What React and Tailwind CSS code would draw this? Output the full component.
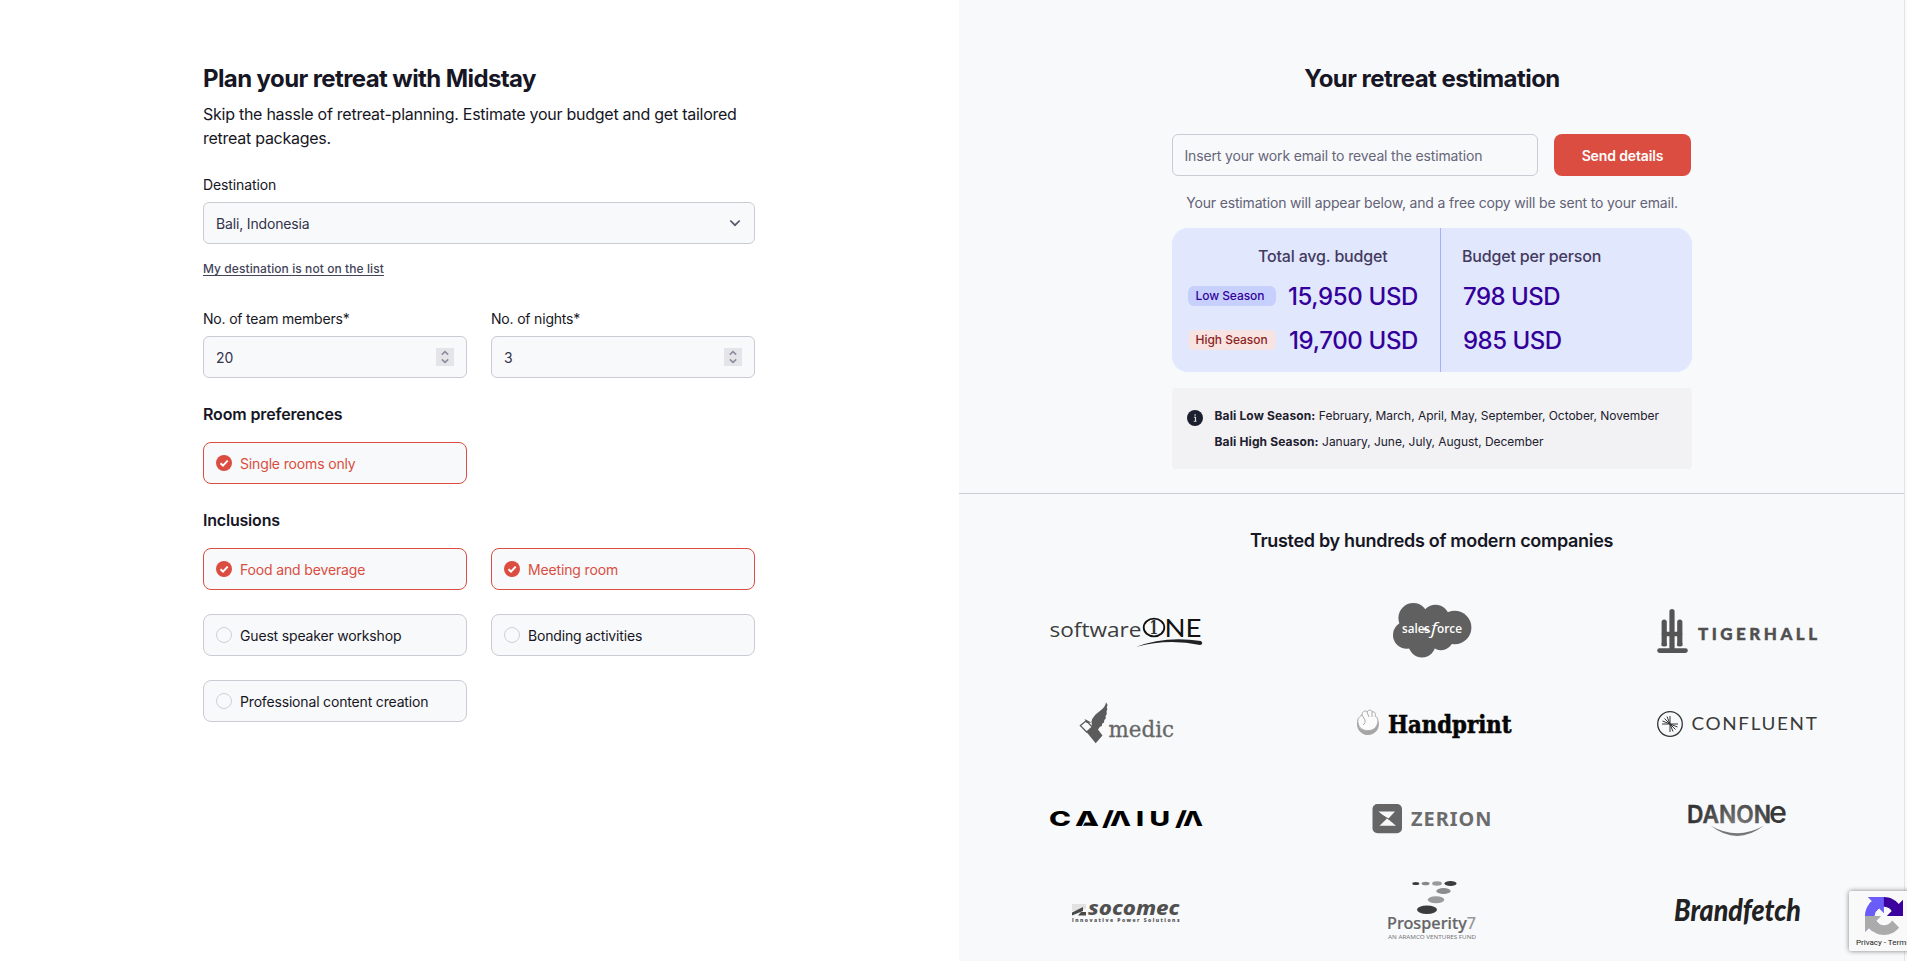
import React from "react";

const field = "h-[42px] rounded-[6px] border border-[#cbcbd3] bg-[#f8f9fb] px-3 flex items-center text-[14px] tracking-[-0.16px]";

function CheckDot() {
  return (
    <svg className="size-4 shrink-0" viewBox="0 0 16 16">
      <circle cx="8" cy="8" r="8" fill="#da4d40" />
      <path d="M4.5 8.3 7 10.6 11.7 5.6" fill="none" stroke="#fff" strokeWidth="2" />
    </svg>
  );
}

function Option({ label, checked }) {
  return (
    <div className={checked
      ? "flex h-[42px] items-center rounded-[8px] border border-[#da4d40] bg-[#f8f9fb] px-3 text-[14px] tracking-[-0.15px] text-[#da4d40]"
      : "flex h-[42px] items-center rounded-[8px] border border-[#cbcbd3] bg-[#f8f9fb] px-3 text-[14px] tracking-[-0.17px] text-[#161624]"}>
      {checked ? <CheckDot /> : <span className="size-4 shrink-0 rounded-full border border-[#d0d0d8]" />}
      <span className="ml-2">{label}</span>
    </div>
  );
}

function NumberField({ label, value }) {
  return (
    <div>
      <div className="h-5 text-[14px] leading-5 tracking-[-0.19px]">{label}</div>
      <div className={field + " mt-[7px] justify-between text-[#33334a]"}>
        <span>{value}</span>
        <span className="mb-px flex h-[18px] w-[18px] items-center justify-center bg-[#e5e4e8]">
          <svg width="10" height="14" viewBox="0 0 10 14" fill="none" stroke="#8d8b9d" strokeWidth="1.5">
            <path d="M1.8 4.6 5 1.6 8.2 4.6M1.8 9.4 5 12.4 8.2 9.4" />
          </svg>
        </span>
      </div>
    </div>
  );
}

function Logo({ x, y, w = 164, children }) {
  return (
    <div className="flex items-center justify-center">
      <svg className="overflow-visible" width={w} height="70" viewBox={`${x} ${y} ${w} 70`}>{children}</svg>
    </div>
  );
}

function Word({ x, y, w, size, font, weight, fill, children, ...rest }) {
  return (
    <text x={x} y={y} textLength={w} lengthAdjust="spacingAndGlyphs" fontSize={size} fontFamily={font} fontWeight={weight} fill={fill} {...rest}>
      {children}
    </text>
  );
}

const rays = [
  [0, -8], [-3, -7.5], [-5.5, -5.5], [-7.5, -3], [-8, 0],
  [0, 8], [3, 7.5], [5.5, 5.5], [7.5, 3], [8, 0],
];

function Logos() {
  return (
    <div className="ml-[14px] mt-7 grid grid-cols-[306px_305px_306px] auto-rows-[94px]">
      <Logo x={1044} y={595}>
        <Word x={1049.5} y={636.5} w={92} size={20.5} font="'Open Sans', sans-serif" weight="400" fill="#3c3c3c">software</Word>
        <ellipse cx="1154" cy="627.5" rx="10.3" ry="8.8" fill="none" stroke="#111" strokeWidth="1.8" />
        <Word x={1149.5} y={634} w={8.5} size={18} font="'DejaVu Serif', serif" weight="700" fill="#333">1</Word>
        <Word x={1164.5} y={636.5} w={37} size={25} font="Lato, sans-serif" weight="400" fill="#111">NE</Word>
        <path d="M1136 647Q1165 635.5 1201 641Q1204 644 1200 645Q1168 638 1136 647Z" fill="#222" />
      </Logo>
      <Logo x={1349} y={595} w={165}>
        <g fill="#606060">
          <circle cx="1413.3" cy="618" r="14.9" />
          <circle cx="1435.5" cy="618.5" r="13.8" />
          <circle cx="1454.7" cy="627.5" r="16.7" />
          <circle cx="1406.8" cy="635" r="13.8" />
          <circle cx="1422" cy="643.8" r="13.6" />
          <circle cx="1441" cy="637.8" r="12.4" />
        </g>
        <Word x={1402} y={633} w={28} size={13} font="'Open Sans', sans-serif" weight="600" fill="#fff">sales</Word>
        <Word x={1431} y={633.5} w={6} size={15.5} font="'Open Sans', sans-serif" weight="500" fill="#fff" fontStyle="italic">f</Word>
        <Word x={1437} y={633} w={25} size={13} font="'Open Sans', sans-serif" weight="600" fill="#fff">orce</Word>
      </Logo>
      <Logo x={1655} y={595}>
        <g stroke="#555" strokeLinecap="round">
          <path d="M1659.5 650.6H1685.5" strokeWidth="4.6" />
          <path d="M1672 611.6V650M1664.2 622V644M1679.8 622V644" strokeWidth="5.2" />
          <path d="M1664 634H1680" strokeWidth="4.6" />
        </g>
        <path d="M1661.6 643H1666.8V646H1661.6ZM1677.2 643H1682.4V646H1677.2Z" fill="#555" />
        <text x="1698" y="640" textLength="119" fontSize="17" fontFamily="Lato, sans-serif" fontWeight="900" fill="#505050" stroke="#505050" strokeWidth="0.4">TIGERHALL</text>
      </Logo>

      <Logo x={1044} y={689}>
        <path d="M1106 702.3L1107.6 705L1106.8 707L1107.3 709.5L1106.5 711.5L1106.8 714L1105.6 716L1105.8 718.5L1104.3 720L1104 722.5L1102.3 723.5L1101.8 726L1100 726.8L1098 729.5L1102.5 735.5L1095.7 743.3L1086.5 732L1092 726.5L1091.5 721.5Q1092 718.5 1094 716.5C1098 711 1105 709.5 1106 702.3Z" fill="#5b5b5b" />
        <path d="M1086.3 720.8L1080.4 725.6L1086.7 732L1092.3 727Z" fill="#f8f9fb" stroke="#5b5b5b" strokeWidth="1.3" />
        <path d="M1084.5 719L1091.5 722.5L1086.5 723Z" fill="#5b5b5b" />
        <Word x={1108.5} y={737.3} w={65.5} size={21.5} font="'DejaVu Serif', serif" weight="400" fill="#666" stroke="#666" strokeWidth="0.3">medic</Word>
      </Logo>
      <Logo x={1349} y={689} w={165}>
        <path d="M1357 723A11 11 0 1 0 1378.5 721Q1372 732 1364 730Q1357 729 1358 719Z" fill="#a5a5a5" />
        <path d="M1359 726C1356 719 1359 717 1362 715C1362 711 1366 710 1367 712C1369 709 1372 710 1372 712C1375 711 1376 714 1375 716C1379 717 1379 725 1374 729C1369 732 1362 731 1359 726Z" fill="#fbfbfb" stroke="#aaa" strokeWidth="1" />
        <path d="M1362 715L1365 720Q1366 723 1363 725M1367 712L1369 717M1372 712L1372 717" fill="none" stroke="#aaa" strokeWidth="1" />
        <Word x={1388} y={732.5} w={123.5} size={23.5} font="'DejaVu Serif', serif" weight="700" fill="#060606" stroke="#060606" strokeWidth="0.6">Handprint</Word>
      </Logo>
      <Logo x={1655} y={689}>
        <circle cx="1670" cy="724" r="12.3" fill="none" stroke="#333" strokeWidth="1.3" />
        <g stroke="#333" strokeWidth="1">
          {rays.map(([a, b]) => <path key={`${a},${b}`} d={`M1670 724L${1670 + a} ${724 + b}`} />)}
        </g>
        <Word x={1691.5} y={730} w={127} size={17.3} font="Lato, sans-serif" weight="400" fill="#3a3a3a" letterSpacing="1.5">CONFLUENT</Word>
      </Logo>

      <Logo x={1044} y={783}>
        <g aria-label="CAMIUM">
          <Word x={1049} y={825.7} w={22} size={20.5} font="Inter, sans-serif" weight="800" fill="#000">C</Word>
          <Word x={1075} y={825.7} w={24} size={20.5} font="Inter, sans-serif" weight="800" fill="#000">Λ</Word>
          <Word x={1102} y={825.7} w={12} size={20.5} font="Inter, sans-serif" weight="800" fill="#000">/</Word>
          <Word x={1110} y={825.7} w={21} size={20.5} font="Inter, sans-serif" weight="800" fill="#000">Λ</Word>
          <Word x={1136} y={825.7} w={8} size={20.5} font="Inter, sans-serif" weight="800" fill="#000">I</Word>
          <Word x={1149.5} y={825.7} w={20.5} size={20.5} font="Inter, sans-serif" weight="800" fill="#000">U</Word>
          <Word x={1175} y={825.7} w={12} size={20.5} font="Inter, sans-serif" weight="800" fill="#000">/</Word>
          <Word x={1183} y={825.7} w={20} size={20.5} font="Inter, sans-serif" weight="800" fill="#000">Λ</Word>
        </g>
        <path d="M1085 822.5H1094V825.7H1083Z" />
      </Logo>
      <Logo x={1349} y={783} w={165}>
        <rect x="1372.5" y="804" width="29.5" height="29.2" rx="5" fill="#666" />
        <path d="M1378.5 811.5H1395L1388 819ZM1378.5 811.5L1388 819L1396 825.8H1379.5L1387 818.5Z" fill="#f8f9fb" />
        <path d="M1380 814L1395.5 823" stroke="#666" strokeWidth="1" />
        <Word x={1411} y={825.5} w={81.5} size={19.5} font="'Noto Sans', sans-serif" weight="700" fill="#6c6c6c" letterSpacing="1">ZERION</Word>
      </Logo>
      <Logo x={1655} y={783}>
        <defs>
          <radialGradient id="danone" gradientUnits="userSpaceOnUse" cx="1737" cy="832" r="48">
            <stop offset="0" stopColor="#8a8a8a" />
            <stop offset="0.7" stopColor="#444" />
            <stop offset="1" stopColor="#333" />
          </radialGradient>
        </defs>
        <Word x={1687} y={822.5} w={84} size={23.8} font="Inter, sans-serif" weight="600" fill="url(#danone)" stroke="url(#danone)" strokeWidth="0.4">DANON</Word>
        <Word x={1769} y={823} w={18} size={30} font="Inter, sans-serif" weight="500" fill="#383838">e</Word>
        <path d="M1710.5 825.5Q1737 841 1764 825.5Q1737 846.5 1710.5 825.5Z" fill="#777" />
      </Logo>

      <Logo x={1044} y={877}>
        <path d="M1072 904H1086V909L1072 911Z" fill="#e2e2e2" />
        <path d="M1072 912.5L1083 907V911L1072 915.5ZM1081 912H1086V915.5H1078Z" fill="#4a4a4a" />
        <Word x={1088} y={915.3} w={91.5} size={19.8} font="'Noto Sans', sans-serif" weight="800" fill="#505050" fontStyle="italic">socomec</Word>
        <text x="1072" y="922" textLength="107.5" fontSize="5" fontFamily="'Open Sans', sans-serif" fontWeight="800" fill="#555">Innovative Power Solutions</text>
      </Logo>
      <Logo x={1349} y={877} w={165}>
        <ellipse cx="1415.8" cy="883.5" rx="3.5" ry="1.5" fill="#3c3c3c" />
        <ellipse cx="1425.6" cy="883.5" rx="4" ry="1.8" fill="#888" />
        <ellipse cx="1437" cy="883.5" rx="4.8" ry="2.2" fill="#999" />
        <ellipse cx="1450.5" cy="883.5" rx="6" ry="2.6" fill="#3c3c3c" />
        <ellipse cx="1443.5" cy="891" rx="7.2" ry="3" fill="#8c8c8c" />
        <ellipse cx="1436" cy="899.8" rx="8.3" ry="3.5" fill="#9b9b9b" />
        <ellipse cx="1427" cy="909.7" rx="10" ry="4.2" fill="#3c3c3c" />
        <Word x={1387} y={929} w={89} size={17} font="'Noto Sans', sans-serif" weight="500" fill="#666" stroke="#666" strokeWidth="0.2">Prosperity<tspan fill="#999" stroke="none">7</tspan></Word>
        <Word x={1388} y={939} w={88} size={6} font="'Noto Sans', sans-serif" weight="400" fill="#777">AN ARAMCO VENTURES FUND</Word>
      </Logo>
      <Logo x={1655} y={877}>
        <Word x={1674} y={920.5} w={127} size={30} font="Lato, sans-serif" weight="900" fill="#222" fontStyle="italic">Brandfetch</Word>
      </Logo>
    </div>
  );
}

function Price({ season, total, each, pill }) {
  return (
    <div className="flex h-11 items-center text-[24px] font-medium text-[#34009a]">
      <div className="flex w-[268px] items-center justify-between pl-4 pr-[22px]">
        <span className={pill}>{season}</span>
        <span className="pt-[2px] tracking-[-0.36px]">{total}</span>
      </div>
      <span className="ml-[23px] pt-[2px] tracking-[-0.5px]">{each}</span>
    </div>
  );
}

export default function App() {
  return (
    <div className="relative flex h-[961px] w-[1907px] overflow-hidden bg-white font-['Inter',sans-serif] text-[#161624]">
      <section className="w-[959px] shrink-0 pl-[203px]">
        <div className="w-[552px]">
          <h1 className="mt-[63px] h-8 text-[24px] font-bold leading-8 tracking-[-0.6px]">Plan your retreat with Midstay</h1>
          <p className="mt-[7px] h-12 whitespace-nowrap text-[16px] leading-6 tracking-[-0.26px]">Skip the hassle of retreat-planning. Estimate your budget and get tailored<br />retreat packages.</p>
          <div className="mt-[25px] h-5 text-[14px] leading-5 tracking-[-0.12px]">Destination</div>
          <div className={field + " mt-[7px] justify-between text-[#33334a]"}>
            <span>Bali, Indonesia</span>
            <svg width="14" height="14" viewBox="0 0 14 14" fill="none" stroke="#55556a" strokeWidth="1.7"><path d="M2.3 4.5 7 9.2 11.7 4.5" /></svg>
          </div>
          <div className="mt-[17px] flex h-[15px]"><a className="h-[15px] whitespace-nowrap border-b border-[#44445a] text-[12px] font-medium leading-4 tracking-[0.08px] text-[#44445a]">My destination is not on the list</a></div>
          <div className="mt-[33px] grid grid-cols-2 gap-x-6">
            <NumberField label="No. of team members*" value="20" />
            <NumberField label="No. of nights*" value="3" />
          </div>
          <h2 className="mt-6 text-[16px] font-semibold leading-6 tracking-[-0.14px]">Room preferences</h2>
          <div className="mt-4 grid grid-cols-2 gap-6"><Option label="Single rooms only" checked /></div>
          <h2 className="mt-6 text-[16px] font-semibold leading-6 tracking-[-0.2px]">Inclusions</h2>
          <div className="mt-4 grid grid-cols-2 gap-6">
            <Option label="Food and beverage" checked />
            <Option label="Meeting room" checked />
            <Option label="Guest speaker workshop" />
            <Option label="Bonding activities" />
            <Option label="Professional content creation" />
          </div>
        </div>
      </section>

      <section className="w-[945px] shrink-0 bg-[#f8f9fb]">
        <div className="ml-[213px] w-[520px]">
          <h1 className="mt-[63px] h-8 text-center text-[24px] font-bold leading-8 tracking-[-0.56px]">Your retreat estimation</h1>
          <div className="mt-[39px] flex justify-between pr-px">
            <div className="flex h-[42px] w-[366px] items-center rounded-[6px] border border-[#cbcbd3] px-[11.5px] text-[14px] tracking-[-0.15px] text-[#66667a]">Insert your work email to reveal the estimation</div>
            <button className="h-[42px] w-[137px] rounded-[8px] bg-[#da4d40] text-[14px] font-semibold tracking-[-0.13px] text-white">Send details</button>
          </div>
          <p className="mt-[17px] h-5 text-center text-[14px] leading-5 tracking-[-0.165px] text-[#626276]">Your estimation will appear below, and a free copy will be sent to your email.</p>
          <div className="mt-[15px] flex h-36 rounded-[16px] bg-[#e1e7fd] bg-[linear-gradient(#a5b0fa,#a5b0fa)] bg-[length:1px_100%] bg-[position:268px_0] bg-no-repeat">
            <div className="w-full pt-4">
              <div className="flex h-6 text-[16px] font-medium leading-6 tracking-[-0.18px] text-[#443a60]">
                <span className="w-[268px] pl-[86px]">Total avg. budget</span>
                <span className="ml-[22px]">Budget per person</span>
              </div>
              <div className="mt-1.5">
                <Price season="Low Season" total="15,950 USD" each="798 USD" pill="h-5 w-[88px] rounded-[6px] bg-[#c7d0fd] pl-[7.5px] text-[12px] font-medium leading-5 tracking-[-0.08px] text-[#34009a]" />
                <Price season="High Season" total="19,700 USD" each="985 USD" pill="h-5 w-[88px] rounded-[6px] bg-[#f8e3e3] pl-[7.5px] text-[12px] font-medium leading-5 tracking-[-0.03px] text-[#8c2422]" />
              </div>
            </div>
          </div>
          <div className="mt-4 flex h-[81px] rounded-[4px] bg-[#f2f1f3] pl-[15px] text-[#20202e]">
            <svg className="mt-[22px] size-4 shrink-0" viewBox="0 0 16 16"><circle cx="8" cy="8" r="8" fill="#1c1f2d" /><path d="M7 7.2H8.5V11M6.8 11.2H9.5" stroke="#ddd" strokeWidth="1.1" fill="none" /><circle cx="8.1" cy="4.9" r="0.9" fill="#aaa" /></svg>
            <div className="ml-[11.5px] mt-[15px] whitespace-nowrap text-[12px] leading-[26px] tracking-[-0.04px]">
              <p><b className="font-bold tracking-[0.13px]">Bali Low Season:</b> February, March, April, May, September, October, November</p>
              <p><b className="font-bold tracking-[0.13px]">Bali High Season:</b> January, June, July, August, December</p>
            </div>
          </div>
        </div>
        <div className="mt-6 h-px bg-[#cbccd2]" />
        <h2 className="mt-[33px] h-7 text-center text-[18px] font-semibold leading-7 tracking-[-0.3px]">Trusted by hundreds of modern companies</h2>
        <Logos />
      </section>
      <div className="w-[3px] shrink-0 border-l border-[#e4e4e6] bg-[#fafafa]" />

      <div className="absolute left-[1849px] top-[891px] h-[60px] w-[256px] rounded-[2px] bg-[#f9f9f9] shadow-[0_0_5px_gray]">
        <svg className="ml-4 mt-1.5" width="38" height="38" viewBox="0 0 64 64">
          <path d="M64 31.955l-.033-1.37V4.687l-7.16 7.16C50.948 4.674 42.033.093 32.05.093c-10.4 0-19.622 4.96-25.458 12.64l11.736 11.86a15.55 15.55 0 0 1 4.754-5.334c2.05-1.6 4.952-2.906 8.968-2.906.485 0 .86.057 1.135.163 4.976.393 9.288 3.14 11.828 7.124l-8.307 8.307L64 31.953" fill="#3c009f" />
          <path d="M31.862.094l-1.37.033H4.594l7.16 7.16C4.58 13.147 0 22.06 0 32.046c0 10.4 4.96 19.622 12.64 25.458L24.5 45.768a15.55 15.55 0 0 1-5.334-4.754c-1.6-2.05-2.906-4.952-2.906-8.968 0-.485.057-.86.163-1.135.393-4.976 3.14-9.288 7.124-11.828l8.307 8.307L31.86.095" fill="#6a5cf8" />
          <path d="M.001 32.045l.033 1.37v25.898l7.16-7.16c5.86 7.173 14.774 11.754 24.76 11.754 10.4 0 19.622-4.96 25.458-12.64l-11.736-11.86a15.55 15.55 0 0 1-4.754 5.334c-2.05 1.6-4.952 2.906-8.968 2.906-.485 0-.86-.057-1.135-.163-4.976-.393-9.288-3.14-11.828-7.124l8.307-8.307c-10.522.04-22.4.066-27.295-.005" fill="#ababab" />
        </svg>
        <div className="ml-[7px] mt-[3px] whitespace-nowrap font-['Roboto',sans-serif] text-[8px] leading-[10px] text-[#222]">Privacy - Terms</div>
      </div>
    </div>
  );
}
